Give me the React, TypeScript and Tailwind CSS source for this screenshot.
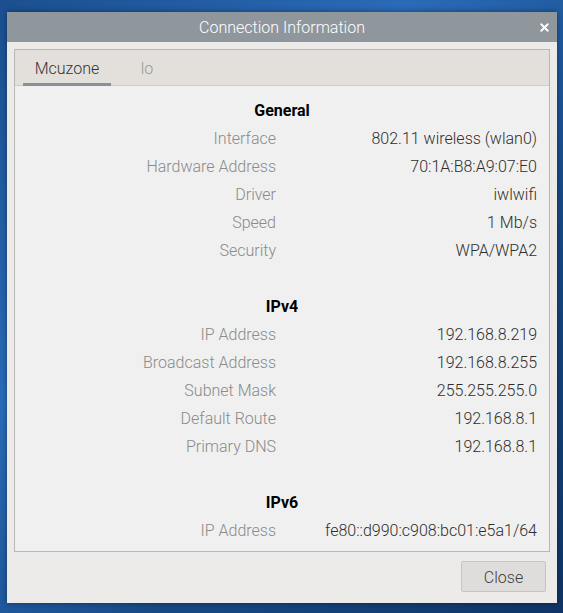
import { X } from "lucide-react";

type Row = { label: string; value: string };

const sections: { title: string; rows: Row[] }[] = [
  {
    title: "General",
    rows: [
      { label: "Interface", value: "802.11 wireless (wlan0)" },
      { label: "Hardware Address", value: "70:1A:B8:A9:07:E0" },
      { label: "Driver", value: "iwlwifi" },
      { label: "Speed", value: "1 Mb/s" },
      { label: "Security", value: "WPA/WPA2" },
    ],
  },
  {
    title: "IPv4",
    rows: [
      { label: "IP Address", value: "192.168.8.219" },
      { label: "Broadcast Address", value: "192.168.8.255" },
      { label: "Subnet Mask", value: "255.255.255.0" },
      { label: "Default Route", value: "192.168.8.1" },
      { label: "Primary DNS", value: "192.168.8.1" },
    ],
  },
  {
    title: "IPv6",
    rows: [{ label: "IP Address", value: "fe80::d990:c908:bc01:e5a1/64" }],
  },
];

export default function App() {
  return (
    <div
      className="w-[563px] h-[613px] overflow-hidden pt-[12px] pl-[7px] bg-[linear-gradient(135deg,#1b4f8f_0%,#2a6bb8_35%,#174a86_65%,#0f3566_100%)]"
      style={{ fontFamily: "Roboto, 'Liberation Sans', sans-serif" }}
    >
      <div className="w-[550px] h-[591px] flex flex-col bg-[#edebe9] shadow-[0_0_6px_rgba(0,0,0,0.4)]">
        {/* title bar */}
        <div className="relative h-[30px] shrink-0 flex items-center justify-center pt-[2px] bg-[#8f969c]">
          <span className="text-white text-[16px] font-light">Connection Information</span>
          <X className="absolute right-[6px] top-[9px] text-white" size={13} strokeWidth={3.5} />
        </div>

        <div className="flex-1 flex flex-col px-[7px] pt-[7px]">
          {/* notebook */}
          <div className="border border-[#b9b7b4] bg-[#f0f0f0]">
            <div className="h-[36px] flex items-stretch bg-[#e3e0dc] border-b border-[#cfccc8] pl-[8px]">
              <div className="relative w-[88px] flex items-center justify-center pt-[2px] text-[16px] font-light text-[#333333]">
                Mcuzone
                <div className="absolute left-0 right-0 bottom-[-1px] h-[3px] bg-[#8a9096]" />
              </div>
              <div className="w-[72px] flex items-center justify-center pt-[2px] text-[16px] font-light text-[#9a9a9a]">lo</div>
            </div>

            <div className="pt-[11px] pb-[6px]">
              {sections.map((s, i) => (
                <div key={s.title} className={i > 0 ? "mt-[28px]" : ""}>
                  <div className="h-[28px] flex items-center justify-center text-[16px] font-bold text-black">
                    {s.title}
                  </div>
                  {s.rows.map((r) => (
                    <div key={r.label + r.value} className="h-[28px] grid grid-cols-[261px_1fr] items-center text-[16px] font-light">
                      <span className="text-right text-[#8a8a8a]">{r.label}</span>
                      <span className="text-right pr-[12px] text-[#2e2e2e]">{r.value}</span>
                    </div>
                  ))}
                </div>
              ))}
            </div>
          </div>

          {/* footer */}
          <div className="flex justify-end pt-[9px] pr-[4px]">
            <button className="w-[85px] h-[31px] pt-[2px] rounded-[2px] border border-[#c7c5c2] bg-[#dfdddb] text-[16px] font-light text-[#3c3c3c]">
              Close
            </button>
          </div>
        </div>
      </div>
    </div>
  );
}
